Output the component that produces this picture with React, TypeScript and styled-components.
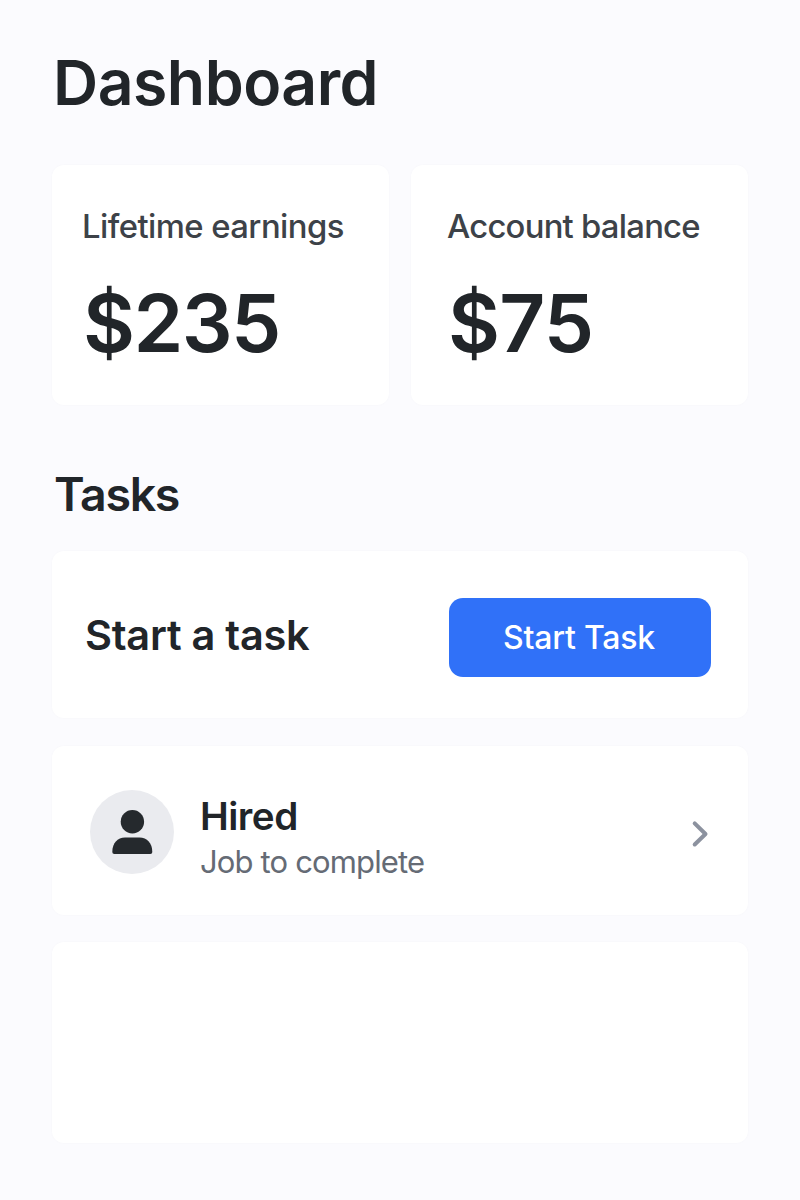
import React from 'react';
import styled, { createGlobalStyle } from 'styled-components';

const GlobalStyle = createGlobalStyle`
  * { box-sizing: border-box; }
  body { margin: 0; background: #fbfbfe; font-family: Inter, "Liberation Sans", sans-serif; color: #212529; }
`;

const Page = styled.main`
  width: 800px;
  height: 1200px;
  padding: 44px 52px 0;
  display: flex;
  flex-direction: column;
  background: #fbfbfe;
  overflow: hidden;
`;

const Text = styled.span<{ $size: number; $line: number; $weight?: number; $track?: number; $color?: string }>`
  display: block;
  white-space: nowrap;
  font-size: ${(p) => p.$size}px;
  line-height: ${(p) => p.$line}px;
  font-weight: ${(p) => p.$weight ?? 600};
  letter-spacing: ${(p) => p.$track ?? 0}px;
  color: ${(p) => p.$color ?? '#212529'};
`;

const Title = styled.h1`
  margin: 0 0 45px 1px;
  font-size: 62.5px;
  line-height: 76px;
  font-weight: 600;
  letter-spacing: -0.5px;
  color: #212529;
`;

const Stats = styled.section`
  display: grid;
  grid-template-columns: 337px 337px;
  gap: 22px;
  margin-bottom: 61px;
`;

const Card = styled.article`
  background: #fff;
  border-radius: 12px;
  box-shadow: 0 0 3px rgba(40, 50, 90, 0.025);
`;

const StatCard = styled(Card)<{ $inset: number }>`
  height: 240px;
  padding: 41px 0 0 ${(p) => p.$inset}px;
`;

const Amount = styled.div`
  padding: 28px 0 0 1px;
`;

const TasksHeading = styled.h2`
  margin: 0 0 29px 2px;
  font-size: 46.5px;
  line-height: 56px;
  font-weight: 600;
  letter-spacing: -1.3px;
`;

const StartCard = styled(Card)`
  height: 167px;
  display: flex;
  justify-content: space-between;
  align-items: flex-start;
  padding: 47px 37px 0 33px;
  margin-bottom: 28px;
`;

const StartLabel = styled.div`
  padding-top: 12px;
`;

const StartButton = styled.button`
  width: 262px;
  height: 79px;
  padding: 1px 2px 0 0;
  border: 0;
  border-radius: 14px;
  background: #3071f8;
  display: grid;
  place-items: center;
  font-family: inherit;
`;

const JobCard = styled(Card)`
  height: 169px;
  display: flex;
  align-items: center;
  padding: 2px 39px 0 38px;
  margin-bottom: 27px;
`;

const Avatar = styled.div`
  width: 84px;
  height: 84px;
  border-radius: 50%;
  background: #eaebef;
  margin-right: 26px;
`;

const JobText = styled.div`
  flex: 1;
  padding-top: 14px;
`;

const Chevron = styled.svg`
  margin-top: 4px;
`;

const EmptyCard = styled(Card)`
  height: 201px;
`;

export default function App() {
  return (
    <>
      <GlobalStyle />
      <Page>
        <Title>Dashboard</Title>
        <Stats>
          <StatCard $inset={30}>
            <Text $size={32.8} $line={40} $weight={500} $track={-0.55} $color="#3d4248">Lifetime earnings</Text>
            <Amount><Text $size={80} $line={98} $track={-1.6}>$235</Text></Amount>
          </StatCard>
          <StatCard $inset={36}>
            <Text $size={32.8} $line={40} $weight={500} $track={-0.75} $color="#3d4248">Account balance</Text>
            <Amount><Text $size={80} $line={98} $track={-0.8}>$75</Text></Amount>
          </StatCard>
        </Stats>
        <TasksHeading>Tasks</TasksHeading>
        <StartCard>
          <StartLabel><Text $size={41.5} $line={50} $track={-0.25}>Start a task</Text></StartLabel>
          <StartButton type="button"><Text $size={32} $line={40} $weight={500} $track={-0.2} $color="#fff">Start Task</Text></StartButton>
        </StartCard>
        <JobCard>
          <Avatar>
            <svg width="84" height="84" viewBox="0 0 84 84" fill="#25292d" aria-hidden="true">
              <circle cx="42.4" cy="31.7" r="11.7" />
              <path d="M22.3 62C22.3 53 27.500 47.500 35 47.500H49.500C57 47.500 62.300 53 62.300 62Q62.300 64 60.300 64H24.300Q22.300 64 22.300 62Z" />
            </svg>
          </Avatar>
          <JobText>
            <Text $size={38.6} $line={46} $track={-0.5}>Hired</Text>
            <Text $size={31} $line={46} $weight={400} $track={-0.85} $color="#656b75">Job to complete</Text>
          </JobText>
          <Chevron width="18" height="28" viewBox="0 0 18 28" fill="none" stroke="#8c929f" strokeWidth="4" strokeLinecap="round" strokeLinejoin="round" aria-hidden="true">
            <path d="M3.700 3.300 14.500 14 3.700 24.500" />
          </Chevron>
        </JobCard>
        <EmptyCard />
      </Page>
    </>
  );
}
